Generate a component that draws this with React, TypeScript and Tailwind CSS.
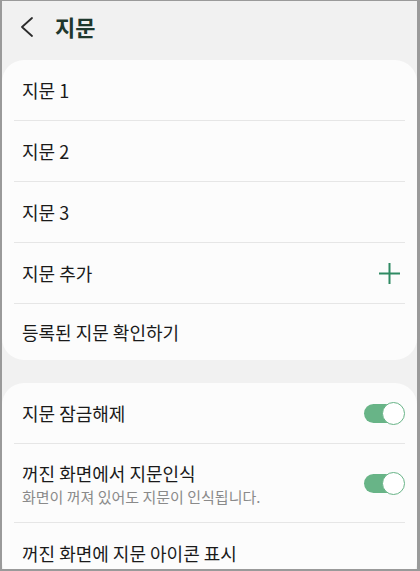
const font = { fontFamily: '"Noto Sans CJK KR", "Noto Sans", sans-serif' };

const Divider = () => <div className="mx-[12px] h-px bg-[#e6e6e6]" />;

const Toggle = () => (
  <div className="relative h-[23px] w-[41px]">
    <div className="absolute left-0 top-[2px] h-[19px] w-[36px] rounded-full bg-[#68b487]" />
    <div className="absolute right-0 top-0 h-[23px] w-[23px] rounded-full border-[1.5px] border-[#68b487] bg-white" />
  </div>
);

const PlusIcon = () => (
  <svg width="21" height="21" viewBox="0 0 21 21">
    <path d="M10.5 0v21M0 10.5h21" stroke="#2f8a63" strokeWidth="2" fill="none" />
  </svg>
);

const BackIcon = () => (
  <svg width="14" height="20" viewBox="0 0 14 20">
    <path d="M12 1L2 10l10 9" stroke="#2b2b2b" strokeWidth="1.8" fill="none" strokeLinecap="round" strokeLinejoin="round" />
  </svg>
);

const Row = ({ label, right, h = 'h-[60px]' }: { label: string; right?: React.ReactNode; h?: string }) => (
  <div className={`flex ${h} items-center justify-between pl-[20px] pr-[17px]`}>
    <span className="text-[18px] text-[#1a1a1a]">{label}</span>
    {right}
  </div>
);

export default function App() {
  const fingerprints = ['지문 1', '지문 2', '지문 3'];

  return (
    <div
      className="box-border h-[571px] w-[420px] overflow-hidden border-b-2 border-l-2 border-r-[3px] border-t border-[#9a9a9a] bg-[#f1f1f1]"
      style={font}
    >
      <div className="flex h-[59px] items-center pb-[8px]">
        <div className="ml-[18px] flex">
          <BackIcon />
        </div>
        <span className="ml-[21px] text-[22px] font-bold text-[#1f382d]">지문</span>
      </div>

      <div className="rounded-[22px] bg-[#fcfcfc]">
        {fingerprints.map((f) => (
          <div key={f}>
            <Row label={f} />
            <Divider />
          </div>
        ))}
        <Row label="지문 추가" right={<PlusIcon />} />
        <Divider />
        <Row label="등록된 지문 확인하기" h="h-[56px]" />
      </div>

      <div className="mt-[23px] rounded-[22px] bg-[#fcfcfc]">
        <div className="flex h-[60px] items-center justify-between pl-[20px] pr-[12px]">
          <span className="text-[18px] text-[#1a1a1a]">지문 잠금해제</span>
          <Toggle />
        </div>
        <Divider />
        <div className="flex h-[78px] items-center justify-between pl-[20px] pr-[12px]">
          <div className="flex flex-col">
            <span className="text-[18px] leading-[26px] text-[#1a1a1a]">꺼진 화면에서 지문인식</span>
            <span className="text-[15px] leading-[21px] text-[#8a8a8a]">화면이 꺼져 있어도 지문이 인식됩니다.</span>
          </div>
          <Toggle />
        </div>
        <Divider />
        <Row label="꺼진 화면에 지문 아이콘 표시" />
      </div>
    </div>
  );
}
